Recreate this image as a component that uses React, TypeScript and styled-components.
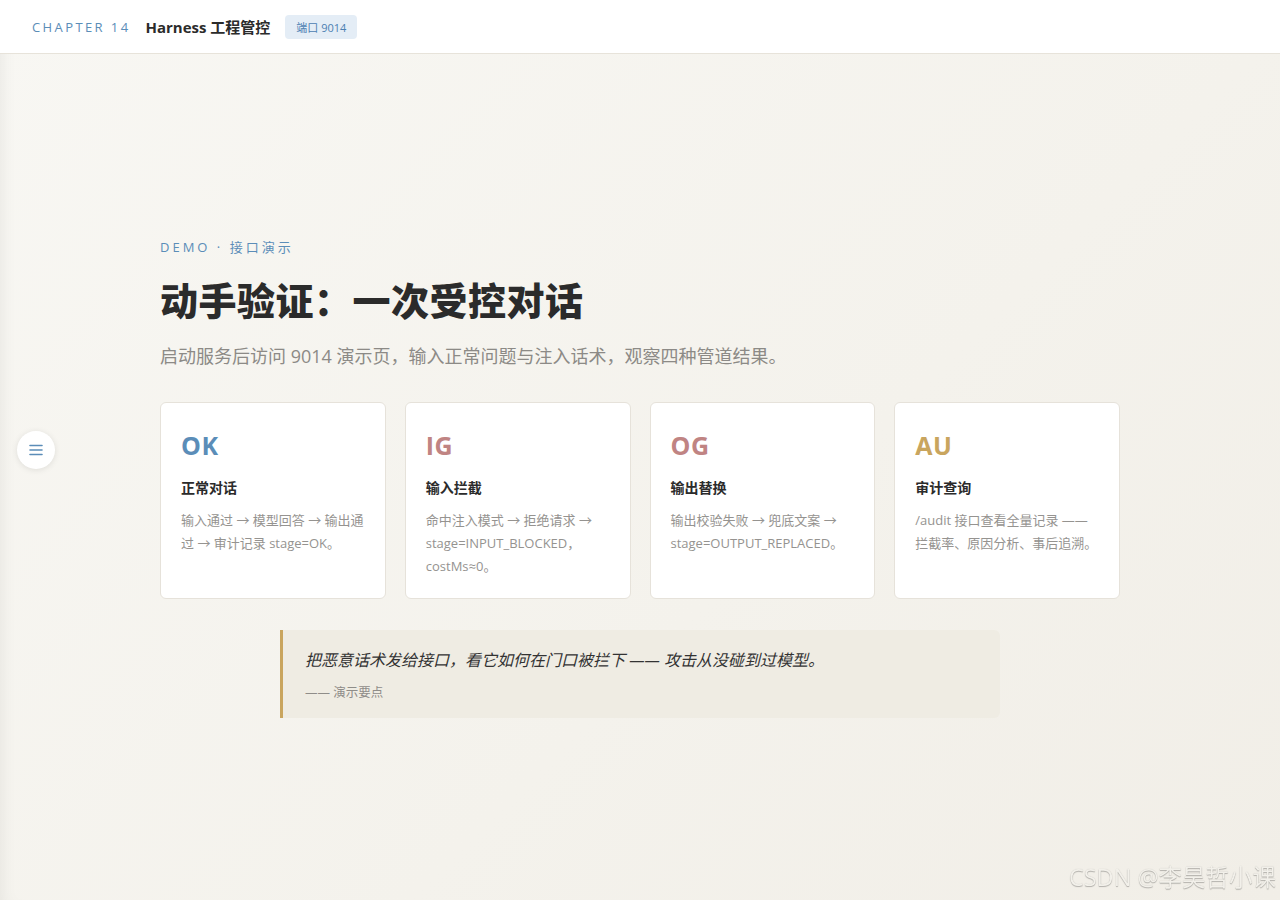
import styled, { createGlobalStyle } from 'styled-components';

const GlobalStyle = createGlobalStyle`
  html, body {
    margin: 0;
    padding: 0;
  }
  body {
    font-family: "Open Sans", "Noto Sans CJK SC", sans-serif;
    background: linear-gradient(135deg, #f8f7f3 0%, #f4f2ec 60%, #f1eee7 100%);
    color: #2b2b2b;
    min-height: 100vh;
  }
`;

interface Card {
  code: string;
  color: string;
  title: string;
  desc: string;
}

const cards: Card[] = [
  { code: 'OK', color: '#5b8db8', title: '正常对话', desc: '输入通过 → 模型回答 → 输出通过 → 审计记录 stage=OK。' },
  { code: 'IG', color: '#c08483', title: '输入拦截', desc: '命中注入模式 → 拒绝请求 → stage=INPUT_BLOCKED，costMs≈0。' },
  { code: 'OG', color: '#c08483', title: '输出替换', desc: '输出校验失败 → 兜底文案 → stage=OUTPUT_REPLACED。' },
  { code: 'AU', color: '#c9a55e', title: '审计查询', desc: '/audit 接口查看全量记录 —— 拦截率、原因分析、事后追溯。' },
];

const Page = styled.div`
  min-height: 100vh;
  display: flex;
  flex-direction: column;
  box-shadow: inset 14px 0 18px -14px rgba(0, 0, 0, 0.08);
`;

const TopBar = styled.header`
  height: 53px;
  background: #ffffff;
  border-bottom: 1px solid #e7e3da;
  display: flex;
  align-items: center;
  padding: 0 32px;
  gap: 15px;
`;

const Chapter = styled.span`
  font-size: 13px;
  letter-spacing: 2.4px;
  color: #5b8db8;
`;

const BarTitle = styled.span`
  font-size: 15px;
  font-weight: 700;
  color: #2b2b2b;
`;

const Badge = styled.span`
  font-size: 11px;
  color: #4c80b2;
  background: #e4edf6;
  border-radius: 4px;
  padding: 4px 11px;
`;

const Main = styled.main`
  flex: 1;
  display: flex;
  align-items: center;
  justify-content: center;
`;

const Content = styled.div`
  width: 960px;
  display: flex;
  flex-direction: column;
`;

const Eyebrow = styled.div`
  font-size: 13px;
  letter-spacing: 3px;
  color: #5b8db8;
`;

const Title = styled.h1`
  margin: 18px 0 0;
  font-size: 38px;
  line-height: 52px;
  font-weight: 800;
  color: #2b2b2b;
  letter-spacing: 0.5px;
`;

const Subtitle = styled.p`
  margin: 17px 0 0;
  font-size: 18px;
  line-height: 26px;
  color: #8c8a86;
`;

const Grid = styled.div`
  margin-top: 33px;
  display: grid;
  grid-template-columns: repeat(4, 1fr);
  gap: 19px;
`;

const CardBox = styled.div`
  background: #ffffff;
  border: 1px solid #e6e2da;
  border-radius: 6px;
  height: 197px;
  box-sizing: border-box;
  padding: 25px 20px 20px;
`;

const Code = styled.div<{ $color: string }>`
  font-size: 25px;
  font-weight: 700;
  line-height: 34px;
  color: ${(p) => p.$color};
  letter-spacing: 0.5px;
`;

const CardTitle = styled.div`
  margin-top: 15px;
  font-size: 14px;
  font-weight: 700;
  color: #2b2b2b;
`;

const CardDesc = styled.div`
  margin-top: 12px;
  font-size: 13px;
  line-height: 23px;
  color: #959390;
`;

const Quote = styled.blockquote`
  margin: 31px auto 0;
  width: 720px;
  box-sizing: border-box;
  background: #efece3;
  border-left: 3px solid #c9a55e;
  border-radius: 0 6px 6px 0;
  padding: 18px 22px 17px;
`;

const QuoteText = styled.div`
  font-size: 16px;
  font-style: italic;
  color: #333333;
  line-height: 24px;
`;

const QuoteSource = styled.div`
  margin-top: 10px;
  font-size: 12.5px;
  color: #8f8d89;
`;

const SideButton = styled.button`
  position: fixed;
  left: 17px;
  top: 431px;
  width: 38px;
  height: 38px;
  border-radius: 50%;
  border: none;
  background: #ffffff;
  box-shadow: 0 1px 6px rgba(0, 0, 0, 0.1);
  display: flex;
  align-items: center;
  justify-content: center;
  cursor: pointer;
  padding: 0;
`;

const Watermark = styled.div`
  position: fixed;
  right: 4px;
  bottom: 7px;
  font-size: 23.5px;
  color: #f2f0ea;
  text-shadow: 0 1px 1px rgba(0, 0, 0, 0.25), 0 0 1px rgba(0, 0, 0, 0.2);
  pointer-events: none;
`;

export default function App() {
  return (
    <Page>
      <GlobalStyle />
      <TopBar>
        <Chapter>CHAPTER 14</Chapter>
        <BarTitle>Harness 工程管控</BarTitle>
        <Badge>端口 9014</Badge>
      </TopBar>
      <Main>
        <Content>
          <Eyebrow>DEMO · 接口演示</Eyebrow>
          <Title>动手验证：一次受控对话</Title>
          <Subtitle>启动服务后访问 9014 演示页，输入正常问题与注入话术，观察四种管道结果。</Subtitle>
          <Grid>
            {cards.map((c) => (
              <CardBox key={c.code}>
                <Code $color={c.color}>{c.code}</Code>
                <CardTitle>{c.title}</CardTitle>
                <CardDesc>{c.desc}</CardDesc>
              </CardBox>
            ))}
          </Grid>
          <Quote>
            <QuoteText>把恶意话术发给接口，看它如何在门口被拦下 —— 攻击从没碰到过模型。</QuoteText>
            <QuoteSource>—— 演示要点</QuoteSource>
          </Quote>
        </Content>
      </Main>
      <SideButton aria-label="menu">
        <svg width="14" height="12" viewBox="0 0 14 12">
          <path d="M1 1.5h12M1 6h12M1 10.5h12" stroke="#5b8db8" strokeWidth="1.6" strokeLinecap="round" />
        </svg>
      </SideButton>
      <Watermark>CSDN @李昊哲小课</Watermark>
    </Page>
  );
}
